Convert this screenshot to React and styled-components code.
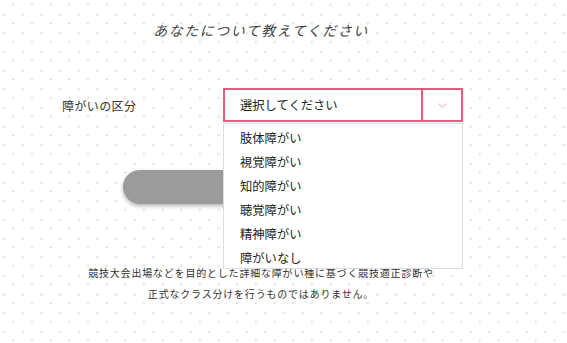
import React from 'react';
import styled, { createGlobalStyle } from 'styled-components';

const GlobalStyle = createGlobalStyle`
  html, body {
    margin: 0;
    padding: 0;
  }
  body {
    font-family: "Noto Sans CJK JP", "Noto Sans", sans-serif;
    color: #333;
    background-color: #fff;
    background-image:
      radial-gradient(circle at center, #dedede 0 0.9px, transparent 1.4px),
      radial-gradient(circle at center, #dedede 0 0.9px, transparent 1.4px);
    background-size: 18.67px 18.67px, 18.67px 18.67px;
    background-position: 4px -4.6px, -5px 5.4px;
    min-height: 343px;
  }
`;

const Page = styled.div`
  width: 522px;
  padding-top: 20px;
`;

const Title = styled.h1`
  margin: 0;
  text-align: center;
  font-size: 14px;
  line-height: 20px;
  font-weight: 400;
  font-style: italic;
  letter-spacing: 1.5px;
  color: #444;
`;

const FormRow = styled.div`
  display: flex;
  align-items: center;
  margin-top: 48px;
  padding-left: 62px;
`;

const Label = styled.div`
  width: 161px;
  font-size: 12px;
  letter-spacing: 0.4px;
  color: #333;
`;

const SelectWrap = styled.div`
  position: relative;
  width: 240px;
`;

const SelectBox = styled.div`
  display: flex;
  height: 34px;
  box-sizing: border-box;
  border: 2px solid #f0587a;
  background: #fff;
`;

const SelectValue = styled.div`
  flex: 1;
  display: flex;
  align-items: center;
  padding-left: 15px;
  font-size: 12.3px;
  color: #222;
  border-right: 2px solid #f0587a;
`;

const Arrow = styled.div`
  width: 38px;
  display: flex;
  align-items: center;
  justify-content: center;
`;

const Options = styled.ul`
  position: absolute;
  top: 35px;
  left: 0;
  right: 0;
  height: 146px;
  box-sizing: border-box;
  margin: 0;
  padding: 2px 0 0;
  list-style: none;
  background: #fff;
  border: 1px solid #dcdcdc;
  z-index: 2;
`;

const Option = styled.li`
  height: 24px;
  line-height: 24px;
  padding-left: 16px;
  font-size: 12.3px;
  color: #222;
`;

const ButtonRow = styled.div`
  display: flex;
  justify-content: center;
  margin-top: 48px;
`;

const Button = styled.button`
  width: 276px;
  height: 34px;
  border: none;
  border-radius: 17px;
  background: #9b9b9b;
  box-shadow: 0 2px 4px rgba(0, 0, 0, 0.3);
`;

const Note = styled.p`
  margin: 58px 0 0;
  text-align: center;
  font-size: 10px;
  line-height: 21px;
  letter-spacing: 0.8px;
  color: #333;
`;

const options = ['肢体障がい', '視覚障がい', '知的障がい', '聴覚障がい', '精神障がい', '障がいなし'];

const App = () => {
  return (
    <>
      <GlobalStyle />
      <Page>
        <Title>あなたについて教えてください</Title>
        <FormRow>
          <Label>障がいの区分</Label>
          <SelectWrap>
            <SelectBox>
              <SelectValue>選択してください</SelectValue>
              <Arrow>
                <svg width="9" height="5" viewBox="0 0 9 5">
                  <polyline points="0.5,0.5 4.5,4.3 8.5,0.5" fill="none" stroke="#f5a3b6" strokeWidth="1" />
                </svg>
              </Arrow>
            </SelectBox>
            <Options>
              {options.map((o) => (
                <Option key={o}>{o}</Option>
              ))}
            </Options>
          </SelectWrap>
        </FormRow>
        <ButtonRow>
          <Button />
        </ButtonRow>
        <Note>
          競技大会出場などを目的とした詳細な障がい種に基づく競技適正診断や<br />
          正式なクラス分けを行うものではありません。
        </Note>
      </Page>
    </>
  );
};

export default App;
